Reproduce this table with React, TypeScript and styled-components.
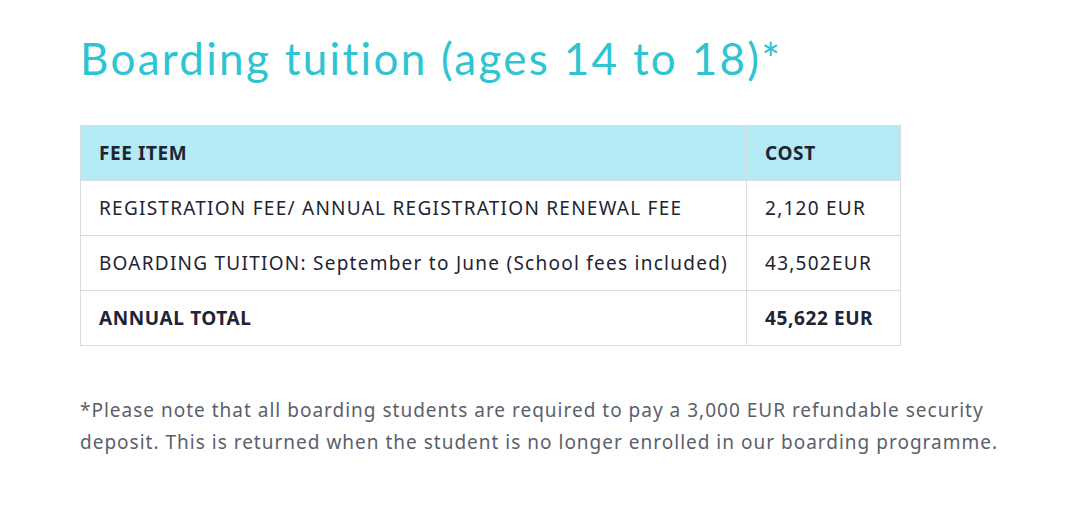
import styled, { createGlobalStyle } from 'styled-components';

const GlobalStyle = createGlobalStyle`
  html, body {
    margin: 0;
    padding: 0;
    background: #ffffff;
  }
  body {
    font-family: 'Noto Sans', 'Liberation Sans', sans-serif;
  }
`;

const Page = styled.main`
  width: 1080px;
  height: 521px;
  box-sizing: border-box;
  padding: 28px 0 0 80px;
  background: #ffffff;
`;

const Title = styled.h1`
  margin: 0;
  font-family: 'Lato', 'Liberation Sans', sans-serif;
  font-weight: 400;
  font-size: 44px;
  line-height: 60px;
  letter-spacing: 2.3px;
  color: #2ec4d2;
`;

const FeeTable = styled.table`
  margin-top: 37px;
  width: 821px;
  border-collapse: collapse;
  font-family: 'Noto Sans', 'Liberation Sans', sans-serif;
  font-size: 19px;
  letter-spacing: 1.25px;
  color: #1e2433;
`;

const HeadRow = styled.tr`
  background: #b4eaf5;
`;

const Cell = styled.td<{ $bold?: boolean; $narrow?: boolean }>`
  height: 54px;
  padding: 0 18px;
  border: 1px solid #d8dde1;
  font-weight: ${(p) => (p.$bold ? 700 : 400)};
  letter-spacing: ${(p) => (p.$bold ? '0.6px' : 'inherit')};
  width: ${(p) => (p.$narrow ? '117px' : 'auto')};
  white-space: nowrap;
`;

const HeadCell = styled(Cell).attrs({ as: 'th' })`
  text-align: left;
  font-weight: 700;
  letter-spacing: 0.6px;
`;

const Note = styled.p`
  margin: 48px 0 0;
  font-family: 'Noto Sans', 'Liberation Sans', sans-serif;
  font-size: 19px;
  line-height: 32px;
  letter-spacing: 1px;
  white-space: nowrap;
  color: #5b606b;
`;

const rows = [
  { item: 'REGISTRATION FEE/ ANNUAL REGISTRATION RENEWAL FEE', cost: '2,120 EUR' },
  { item: 'BOARDING TUITION: September to June (School fees included)', cost: '43,502EUR' },
];

export default function App() {
  return (
    <>
      <GlobalStyle />
      <Page>
        <Title>Boarding tuition (ages 14 to 18)*</Title>
        <FeeTable>
          <thead>
            <HeadRow>
              <HeadCell>FEE ITEM</HeadCell>
              <HeadCell $narrow>COST</HeadCell>
            </HeadRow>
          </thead>
          <tbody>
            {rows.map((r) => (
              <tr key={r.item}>
                <Cell>{r.item}</Cell>
                <Cell $narrow>{r.cost}</Cell>
              </tr>
            ))}
            <tr>
              <Cell $bold>ANNUAL TOTAL</Cell>
              <Cell $bold $narrow>45,622 EUR</Cell>
            </tr>
          </tbody>
        </FeeTable>
        <Note>
          *Please note that all boarding students are required to pay a 3,000 EUR refundable security
          <br />
          deposit. This is returned when the student is no longer enrolled in our boarding programme.
        </Note>
      </Page>
    </>
  );
}
